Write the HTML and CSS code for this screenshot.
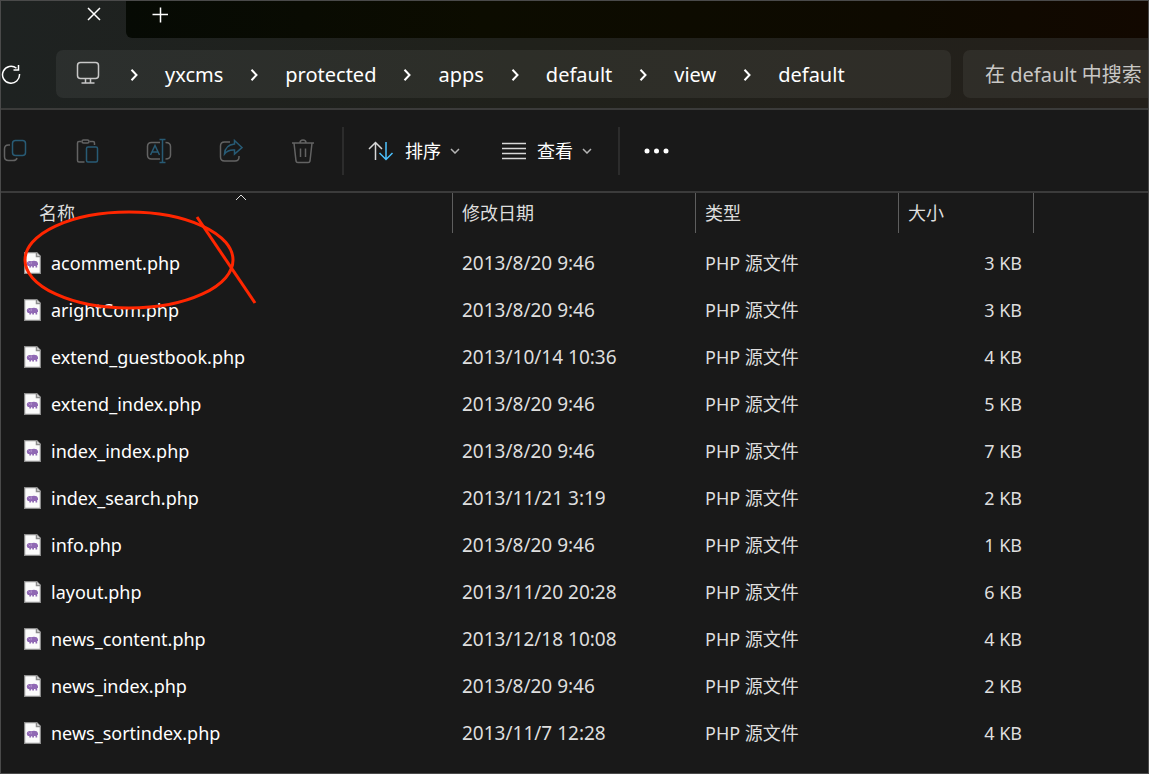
FILE: index.html
```html
<!DOCTYPE html>
<html lang="zh-CN">
<head>
<meta charset="utf-8">
<title>default</title>
<link rel="stylesheet" href="styles.css">
<script src="files.js" defer></script>
</head>
<body>
<svg class="sprite" aria-hidden="true">
  <symbol id="chevron" viewBox="0 0 8 14"><path d="M1.500 1.800 6.500 7l-5 5.200"/></symbol>
  <symbol id="down" viewBox="0 0 10 6"><path d="M1 1l4 4 4-4"/></symbol>
  <symbol id="file" viewBox="0 0 17 22">
    <path d="M.5.5h12l4 4v17H.5z" fill="#fbfbfb" stroke="#8c8c8c"/>
    <path d="M12.500.5v4h4" fill="#e4e4e4" stroke="#8c8c8c"/>
    <path d="M2.800 11.500C2.800 9.300 5 8.500 7 9.200c2.200-.7 6.800-1 7 2.300v1.500h-.8v2.500h-1.700v-1.500H10v1.500H8.200V14.200H7v1.300H5.300V14C4 14.200 3 13.500 2.800 11.500z" fill="#9068b4"/>
    <path d="M4.500 10.500l1.600 1.500M7.200 10v2.200" stroke="#c4aad8" stroke-width=".7" fill="none"/>
  </symbol>
</svg>
<div class="window">
  <header class="header">
    <div class="tabs">
      <div class="tab">
        <button class="plain" aria-label="关闭标签页"><svg width="14" height="14" viewBox="0 0 14 14"><path d="M1 1l12 12M13 1 1 13"/></svg></button>
      </div>
      <div class="strip">
        <button class="plain" aria-label="新标签页"><svg width="16" height="16" viewBox="0 0 16 16"><path d="M8.500 .5v15M.5 7.500h16"/></svg></button>
      </div>
    </div>
    <div class="navigation">
      <button class="plain refresh" aria-label="刷新"><svg width="20" height="20" viewBox="0 0 20 20"><path d="M15.500 4.200A8.500 8.500 0 1 0 18.500 10M17.500 1v5h-5"/></svg></button>
      <nav class="address" aria-label="路径">
        <button class="plain monitor" aria-label="此电脑"><svg width="24" height="24" viewBox="0 0 24 24"><rect x="1.500" y="1.500" width="21" height="16" rx="3"/><path d="M5.500 22h13M9.500 18v4M14.500 18v4"/></svg></button>
        <svg class="chevron"><use href="#chevron"/></svg>
        <a href="#">yxcms</a>
        <svg class="chevron"><use href="#chevron"/></svg>
        <a href="#">protected</a>
        <svg class="chevron"><use href="#chevron"/></svg>
        <a href="#">apps</a>
        <svg class="chevron"><use href="#chevron"/></svg>
        <a href="#">default</a>
        <svg class="chevron"><use href="#chevron"/></svg>
        <a href="#">view</a>
        <svg class="chevron"><use href="#chevron"/></svg>
        <a href="#">default</a>
      </nav>
      <input class="search" type="text" aria-label="搜索" placeholder="在 default 中搜索">
    </div>
  </header>
  <div class="toolbar">
    <div class="actions">
      <button class="plain" aria-label="复制" disabled><svg width="24" height="24" viewBox="0 0 24 24"><path d="M7 6H5.500Q1.500 6 1.500 10v7.500q0 4 4 4H10q3.500 0 4-2.500"/><rect class="blue" x="9.500" y="1.500" width="13" height="15" rx="3"/></svg></button>
      <button class="plain" aria-label="粘贴" disabled><svg width="24" height="24" viewBox="0 0 24 24"><path d="M6.500 2.500H4q-1.500 0-1.500 1.500v17.500q0 1.500 1.500 1.500h5.500M14.500 2.500H18q1.500 0 1.500 1.500v2"/><rect x="7" y="1" width="7" height="3" rx="1.500"/><rect class="blue" x="11.500" y="8" width="11" height="15" rx="1.500"/></svg></button>
      <button class="plain" aria-label="重命名" disabled><svg width="26" height="26" viewBox="0 0 26 26"><path d="M14 4.500H5.500q-4 0-4 4v8.500q0 4 4 4H14M19.500 4.500q5 0 5 4v8.500q0 4-5 4"/><path class="blue" d="M4.500 17 9 7.500l4.500 9.500M6 14h6M16.500 1.500v23M13.500 1.500h6M13.500 24.500h6"/></svg></button>
      <button class="plain" aria-label="共享" disabled><svg width="24" height="24" viewBox="0 0 24 24"><path d="M11 3H5.500q-4 0-4 4v11q0 4 4 4H16q4 0 4-4v-1"/><path class="blue" d="M15.500 1.500 23 8.500 15.500 15v-4Q9 10.500 5.500 15 6 6 15.500 5z"/></svg></button>
      <button class="plain" aria-label="删除" disabled><svg width="24" height="26" viewBox="0 0 24 26"><path d="M1 5h22M3 5l2 18q.3 1.500 1.800 1.500h10.400q1.500 0 1.800-1.500l2-18M9 5q0-3 3-3t3 3M9.500 10.500V19M14.500 10.500V19"/></svg></button>
    </div>
    <div class="menus">
      <button class="plain menu"><svg width="26" height="20" viewBox="0 0 26 20"><path d="M7.500 19V1.500M1 8l6.500-6.500L14 8"/><path class="bright" d="M18 1v17.500M11.500 12l6.500 6.500L24.500 12"/></svg><span>排序</span><svg class="down"><use href="#down"/></svg></button>
      <button class="plain menu"><svg width="24" height="18" viewBox="0 0 24 18"><path d="M0 1.500h24M0 6.500h24M0 11.500h24M0 16.500h24"/></svg><span>查看</span><svg class="down"><use href="#down"/></svg></button>
    </div>
    <button class="plain more" aria-label="更多"><svg width="26" height="6" viewBox="0 0 26 6"><circle cx="3" cy="3" r="2.500"/><circle cx="12.500" cy="3" r="2.500"/><circle cx="22" cy="3" r="2.500"/></svg></button>
  </div>
  <main class="content">
    <table class="files">
      <colgroup><col class="col-name"><col class="col-date"><col class="col-type"><col class="col-size"><col></colgroup>
      <thead>
        <tr>
          <th class="name"><div>名称<svg class="sort" viewBox="0 0 12 7"><path d="M1 6l5-5 5 5"/></svg></div></th>
          <th><div>修改日期</div></th>
          <th><div>类型</div></th>
          <th><div>大小</div></th>
          <td></td>
        </tr>
      </thead>
      <tbody id="rows"></tbody>
    </table>
    <svg class="marking" width="260" height="120" viewBox="0 0 260 120" aria-hidden="true"><ellipse cx="129" cy="67" rx="104" ry="48"/><path d="M197 24l58 86"/></svg>
  </main>
</div>
</body>
</html>
```
FILE: files.js
```js
const files = [
  ["acomment.php", "2013/8/20 9:46", 3],
  ["arightCom.php", "2013/8/20 9:46", 3],
  ["extend_guestbook.php", "2013/10/14 10:36", 4],
  ["extend_index.php", "2013/8/20 9:46", 5],
  ["index_index.php", "2013/8/20 9:46", 7],
  ["index_search.php", "2013/11/21 3:19", 2],
  ["info.php", "2013/8/20 9:46", 1],
  ["layout.php", "2013/11/20 20:28", 6],
  ["news_content.php", "2013/12/18 10:08", 4],
  ["news_index.php", "2013/8/20 9:46", 2],
  ["news_sortindex.php", "2013/11/7 12:28", 4]
];
document.getElementById("rows").innerHTML = files.map(([name, date, size]) => `
  <tr>
    <td class="name"><div><svg class="file"><use href="#file"/></svg>${name}</div></td>
    <td class="date">${date}</td>
    <td>PHP 源文件</td>
    <td class="size">${size} KB</td>
    <td></td>
  </tr>`).join("");
```
FILE: styles.css
```css
* { box-sizing: border-box; }
body {
  margin: 0;
  background: #191919;
  color: #dedede;
  font: 18px/24px "Noto Sans", "Noto Sans CJK SC", sans-serif;
}
svg { display: block; flex: none; fill: none; stroke: currentColor; stroke-width: 1.5; }
.sprite { position: absolute; width: 0; height: 0; }
.window {
  min-height: 100vh;
  border: 1px solid #4a4a4a;
  overflow: hidden;
}
.plain {
  display: flex;
  align-items: center;
  padding: 0;
  border: 0;
  background: none;
  color: inherit;
  font: inherit;
}
.header {
  background: linear-gradient(90deg, #1e2221, #20211b 45%, #24201b);
  border-bottom: 2px solid #3b3b3a;
  color: #fff;
}
.tabs { display: flex; height: 37px; }
.tab {
  display: flex;
  justify-content: flex-end;
  align-items: flex-start;
  width: 125px;
  padding: 6px 25px 0 0;
}
.strip {
  flex: 1;
  display: flex;
  align-items: flex-start;
  padding: 6px 0 0 26px;
  border-bottom-left-radius: 6px;
  background: linear-gradient(90deg, #060a04, #0c0c00 35%, #0e0a00 75%, #120800);
}
.navigation {
  display: flex;
  align-items: center;
  height: 70px;
  padding-top: 1px;
}
.refresh { width: 55px; }
.address {
  flex: 1;
  display: flex;
  align-items: center;
  gap: 27px;
  height: 48px;
  padding: 2px 0 0 20px;
  border-radius: 7px;
  background: rgb(255 255 255 / 6%);
  font-size: 20px;
}
.address a { color: inherit; text-decoration: none; }
.monitor { padding: 0 3px 4px 0; color: #c8c8c8; }
.chevron { width: 8px; height: 14px; stroke-width: 2; }
.search {
  width: 185px;
  height: 48px;
  margin-left: 12px;
  padding: 2px 0 0 22px;
  border: 0;
  border-radius: 7px 0 0 7px;
  background: rgb(255 255 255 / 6%);
  color: #fff;
  font: inherit;
  font-size: 20px;
}
.search::placeholder { color: #c9c8c6; opacity: 1; }
.toolbar {
  display: flex;
  align-items: center;
  height: 83px;
  border-bottom: 2px solid #3b3b3b;
  color: #fff;
}
.actions { display: flex; gap: 48px; padding: 0 27px 0 2px; color: #636363; }
.actions button { justify-content: center; width: 24px; }
.blue { stroke: #285b75; }
.bright { stroke: #4cc2ff; }
.menus {
  display: flex;
  align-items: center;
  gap: 42px;
  height: 48px;
  padding: 0 26px 0 24px;
  border-left: 2px solid #2c2c2c;
  border-right: 2px solid #2c2c2c;
}
.menu > svg:first-child { margin-right: 11px; color: #d8d8d8; }
.down { width: 10px; height: 6px; margin-left: 9px; color: #b5b5b5; }
.more { padding-left: 24px; }
.more circle { fill: #fff; stroke: none; }
.content { position: relative; }
.files { width: 100%; border-collapse: collapse; table-layout: fixed; }
.col-name { width: 452px; }
.col-date { width: 243px; }
.col-type { width: 203px; }
.col-size { width: 135px; }
th, td { height: 47px; padding: 0 0 0 9px; text-align: left; font-weight: 400; white-space: nowrap; }
thead th, thead td { height: 46px; padding: 0; vertical-align: top; }
th div {
  position: relative;
  display: flex;
  align-items: center;
  height: 40px;
  padding-left: 9px;
  border-right: 1px solid #5e5e5e;
}
th.name div { padding-left: 38px; }
.sort { position: absolute; top: 1px; left: 234px; width: 12px; height: 7px; stroke-width: 1; }
td.name { padding-left: 23px; color: #fff; }
td.name div { display: flex; align-items: center; gap: 10px; }
td.date { font-size: 19px; }
td.size { padding-right: 12px; text-align: right; }
.file { width: 17px; height: 22px; stroke: none; }
.marking { position: absolute; top: 0; left: -1px; stroke: #ff2600; stroke-width: 3; pointer-events: none; }
```
